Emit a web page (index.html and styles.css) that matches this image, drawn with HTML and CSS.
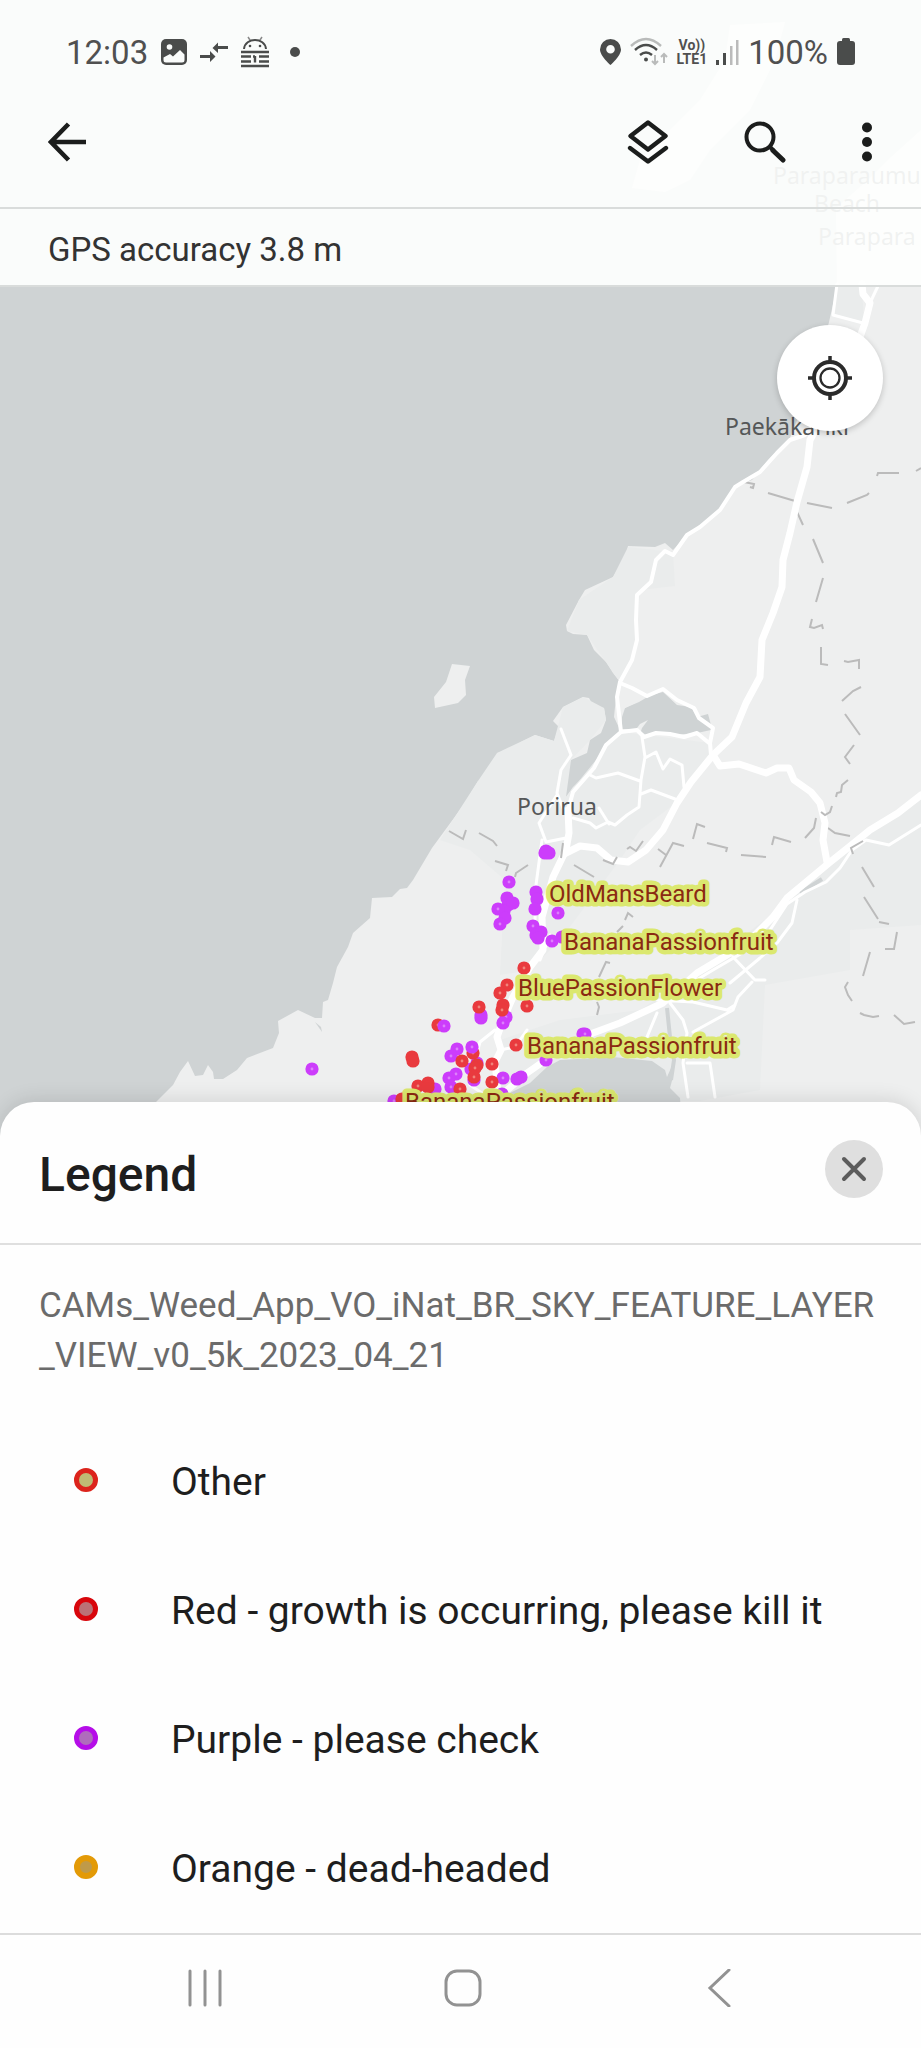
FILE: index.html
```html
<!DOCTYPE html>
<html lang="en">
<head>
<meta charset="utf-8">
<meta name="viewport" content="width=device-width, initial-scale=1">
<title>Map legend</title>
<link rel="stylesheet" href="styles.css">
</head>
<body>
<div class="screen">
  <svg class="map" viewBox="0 0 921 1140" role="img" aria-label="Map of weed sites around Porirua">
    <defs>
      <g id="p"><circle r="6.6" fill="#cc3dfb"/><circle r="1.4" fill="#dd80fb"/></g>
      <g id="r"><circle r="6.6" fill="#e93a3e"/><circle r="1.4" fill="#f0857c"/></g>
      <circle id="ps" r="6.6" fill="#cc3dfb"/>
      <circle id="rs" r="6.6" fill="#e93a3e"/>
    </defs>
    <rect class="water" width="921" height="1140"/>
    <path class="land" d="M730 25L785 22L775 60L750 110L710 150L690 180L665 192L632 188L640 160L670 130L700 100L725 60Z"/>
    <path class="land" d="M921 130L890 158L868 180L836 208L837 287L829 322L815 375L790 438L768 460L752 480L735 486L720 508L700 526L687 535L673 550L665 543L655 547L628 546L626 556L613 577L585 590L579 600L566 625L567 631L573 634L587 635L594 650L606 662L613 673L620 682L616 697L614 717L621 732L608 742L601 757L587 773L573 787L566 797L561 787L563 773L571 760L587 753L590 740L601 733L606 720L604 708L594 707L589 698L583 697L563 707L553 721L559 727L554 741L535 735L521 742L513 750L497 753L497 766L494 778L478 781L465 803L432 848L413 880L407 888L400 889L392 897L372 898L370 918L353 933L348 947L337 967L333 983L328 1000L323 1002L322 1018L315 1018L298 1010L278 1021L279 1033L273 1048L247 1058L237 1070L223 1079L214 1079L213 1072L208 1065L203 1075L195 1076L188 1061L180 1072L173 1085L157 1101L120 1140H921Z"/>
    <path class="land" d="M452 664L470 666L465 680L466 695L458 703L435 708L434 697L446 682Z"/>
    <g class="urban">
      <path d="M628 547L673 552L675 586L640 590L636 640L632 660L620 682L606 662L587 635L567 631L579 600L613 577Z"/>
      <path d="M563 707L583 697L604 708L606 720L590 740L571 760L566 797L600 755L621 732L710 743L711 760L680 800L640 830L620 860L560 940L530 970L500 975L505 880L470 850L440 840L478 781L497 753L535 735L554 741Z"/>
      <path d="M921 800L860 840L790 900L700 970L640 1010L560 1020L500 1040L490 1101H700L760 1090L765 985L850 970L850 930L921 925Z"/>
      <path d="M838 287L833 315L864 323L862 287Z"/>
    </g>
    <path class="water" d="M622 717L625 708L639 702L651 695L663 692L677 705L691 707L697 717L708 714L711 725L711 730L697 733L673 735L646 735L637 729L622 729Z"/>
    <path class="land" d="M620 684L632 689L644 696L639 701L625 708L620 712Z"/>
    <path class="land" d="M634 732L640 724L648 720L642 728L640 734Z"/>
    <path class="water" d="M510 1093L530 1083L547 1067L560 1060L613 1057L652 1061L665 1070L667 1077L671 1068L673 1077L670 1088L680 1098L683 1140H520L518 1104Z"/>
    <path class="water" d="M315 1022L322 1032L321 1027Z"/>
    <path class="river" d="M667 1008L670 1037L674 1060L671 1080M800 893L822 879M768 922L778 912"/>
    <g class="dash">
      <path d="M744 482L754 484L753 488L750 487M768 493L795 501M796 502L797 512L803 525M807 503L832 508M847 503L867 495L869 493M877 476L878 473H899M916 471L921 468M813 539L823 563M823 578L816 602M812 619L810 627L814 628L822 625L823 629M821 647V664L828 665M844 661L848 662L859 660V669M842 701L853 691L861 687M845 714L860 735M854 745L845 757L850 764M848 780L842 785L841 792L837 793L836 797M816 818L814 828L805 838M828 828L835 833L850 836M772 845L774 837L791 842M862 867L874 887M864 897L878 919M879 922L889 924M897 932L894 949H885M870 952L863 976M848 982L845 987L848 995L852 1001M860 1013L864 1015L873 1017L879 1016M894 1015L904 1024L915 1022"/>
      <path d="M449 831L463 839L466 830M479 833L493 841L497 846M495 861L508 865L506 871M528 865L516 873L515 877M574 865L594 877M627 849L630 847L636 851L643 841M660 867L673 843L684 846M658 849L666 855M693 839L697 824L705 827M707 843L727 848L726 852M741 855L766 857M617 932L623 926M625 920L628 913L633 917M599 977L606 962L610 963M597 1002L599 1007L597 1015"/>
    </g>
    <g class="road wide">
      <path d="M862 284L863 294L870 303L865 323L860 337L838 390L810 440L807 467L797 502L790 533L783 560L782 587L773 613L762 640L760 677L746 703L732 737L713 755L691 782L677 803L663 830L646 850L628 862L611 860L597 848L580 846L566 853"/>
      <path d="M713 755L720 766L739 764L766 773L777 768L789 768L794 780L811 792L820 803L825 823L823 840L827 862"/>
      <path d="M921 795L898 813L870 830L849 847L829 863L787 898L773 917L747 943L697 973L663 1003L620 1023L593 1033L567 1045L527 1073L505 1092"/>
      <path d="M568 810L569 833L566 850L553 877L542 917L543 950L530 967L513 997L503 1020L497 1037L501 1050L495 1062L500 1110"/>
    </g>
    <g class="road mid">
      <path d="M838 400L805 435L790 440L777 453L760 472L743 482L735 487L720 510L700 527L687 535L673 555L665 551L656 560L651 582L637 595L636 620L637 640L632 660L620 682L617 697L621 732L606 745L594 768L573 792L568 810"/>
      <path d="M620 683L632 688L647 696L663 689L677 700L694 708L699 718L713 728L710 743L711 755M621 732L637 730L644 737L656 733L670 734L684 737L697 733L709 743"/>
    </g>
    <g class="road thin">
      <path d="M837 284L833 315L863 323M878 286L870 303"/>
      <path d="M642 737L645 757L641 780L639 807L627 815L615 825L608 822L596 828L590 823L573 818M599 808L609 824M590 775L596 778L618 773L640 781M645 758L656 752L663 769L670 759L682 765L684 787M641 794L651 790L675 799"/>
      <path d="M561 729L571 755L561 770L557 793L565 813M557 795L539 823L546 842L566 838M542 840L536 885L535 920"/>
      <path d="M921 825L889 845L866 840L852 850L840 868L826 882L805 892L787 904L770 930M797 900L792 923L777 943L760 958L730 983M773 935L713 970L680 990M733 957L755 980H765M752 982L738 997L733 1010L693 1032M657 1000L693 1002L727 1010L735 1005M670 1003L683 1020L687 1033L683 1063L688 1097M687 1063L710 1063L715 1097M657 1013L647 1037M550 935L540 960M500 1050L515 1047L527 1030M495 1030L480 1042L475 1060M470 1085L482 1093"/>
    </g>
    <path class="dash" d="M832 806L830 812L825 815L821 812M863 841L851 848L853 854M563 843L561 858M603 860L613 864L617 857"/>

    <g class="place">
      <text x="773" y="184">Paraparaumu</text>
      <text x="814" y="212">Beach</text>
      <text x="818" y="245">Parapara</text>
      <text x="725" y="435">Paekākāriki</text>
      <text x="517" y="815">Porirua</text>
    </g>

    <g>
      <use href="#ps" x="546" y="851"/><use href="#ps" x="549" y="853"/><use href="#ps" x="545" y="853"/><use href="#p" x="509" y="882"/><use href="#ps" x="507" y="898"/><use href="#ps" x="508" y="905"/><use href="#ps" x="513" y="903"/><use href="#ps" x="504" y="911"/><use href="#p" x="498" y="909"/><use href="#ps" x="505" y="918"/><use href="#p" x="500" y="924"/>
      <use href="#ps" x="536" y="892"/><use href="#ps" x="537" y="899"/><use href="#ps" x="535" y="909"/><use href="#p" x="558" y="913"/><use href="#p" x="533" y="926"/><use href="#ps" x="541" y="932"/><use href="#ps" x="536" y="935"/><use href="#ps" x="538" y="938"/><use href="#ps" x="562" y="937"/><use href="#p" x="552" y="941"/>
      <use href="#ps" x="481" y="1015"/><use href="#ps" x="481" y="1018"/><use href="#p" x="506" y="1017"/><use href="#p" x="503" y="1023"/><use href="#ps" x="583" y="1034"/><use href="#p" x="585" y="1034"/><use href="#p" x="457" y="1049"/><use href="#p" x="451" y="1056"/><use href="#p" x="546" y="1060"/><use href="#p" x="456" y="1074"/><use href="#p" x="449" y="1078"/><use href="#p" x="451" y="1087"/><use href="#p" x="503" y="1078"/><use href="#ps" x="517" y="1079"/><use href="#ps" x="521" y="1077"/><use href="#ps" x="477" y="1063"/><use href="#ps" x="471" y="1069"/><use href="#ps" x="474" y="1080"/><use href="#ps" x="435" y="1089"/><use href="#p" x="502" y="1094"/><use href="#p" x="394" y="1101"/><use href="#p" x="312" y="1069"/>
      <use href="#r" x="524" y="968"/><use href="#r" x="507" y="985"/><use href="#r" x="500" y="993"/><use href="#rs" x="503" y="1005"/><use href="#r" x="502" y="1010"/><use href="#r" x="527" y="1006"/><use href="#r" x="479" y="1007"/><use href="#r" x="438" y="1025"/><use href="#p" x="444" y="1026"/><use href="#r" x="516" y="1045"/><use href="#rs" x="412" y="1057"/><use href="#rs" x="413" y="1061"/><use href="#r" x="473" y="1053"/><use href="#p" x="472" y="1047"/><use href="#r" x="462" y="1061"/><use href="#r" x="492" y="1064"/><use href="#rs" x="477" y="1065"/><use href="#r" x="475" y="1068"/><use href="#r" x="474" y="1077"/><use href="#r" x="492" y="1082"/><use href="#r" x="428" y="1083"/><use href="#r" x="418" y="1086"/><use href="#rs" x="428" y="1087"/><use href="#r" x="460" y="1089"/><use href="#rs" x="402" y="1099"/>
    </g>
    <g class="weed">
      <text x="549" y="902">OldMansBeard</text>
      <text x="564" y="950">BananaPassionfruit</text>
      <text x="518" y="996">BluePassionFlower</text>
      <text x="527" y="1054">BananaPassionfruit</text>
      <text x="405" y="1110">BananaPassionfruit</text>
    </g>
  </svg>

  <header class="top">
    <div class="status">
      <div class="status-group">
        <time>12:03</time>
        <svg width="26" height="26" viewBox="0 0 26 26"><rect width="26" height="26" rx="5" fill="#4a4c4b"/><circle cx="8.500" cy="8" r="2.800" fill="#fafcfb"/><path d="M2.500 18.500L9 15L12 17.500L19 11L23.500 15.500V21Q23.500 23.500 21 23.500H5Q2.500 23.500 2.500 21Z" fill="#fafcfb"/></svg>
        <svg width="28" height="26" viewBox="0 0 28 26" fill="#4a4c4b"><path d="M0 16H10V12L15.500 17.500L10 23V19H0ZM28 7H18V3.500L12.500 9L18 14V10H28Z"/></svg>
        <svg width="28" height="32" viewBox="0 0 28 32"><path d="M7 1L9 4M21 1L19 4" stroke="#888" stroke-width="1.500"/><path d="M3 13C4 1 24 1 25 13" fill="none" stroke="#4a4c4b" stroke-width="2"/><circle cx="9" cy="10" r="1.300" fill="#4a4c4b"/><circle cx="19" cy="10" r="1.300" fill="#4a4c4b"/><path d="M0 16H28M0 20.500H10M18 20.500H28M0 25.500H10M18 25.500H28M0 30H28M14 20V26.500M12 20.500H14" stroke="#4a4c4b" stroke-width="2.400"/></svg>
        <svg class="more-dot" width="10" height="10" viewBox="0 0 10 10"><circle cx="5" cy="5" r="5" fill="#4a4c4b"/></svg>
      </div>
      <div class="status-group status-right">
        <svg width="21" height="26" viewBox="0 0 21 26"><path d="M10.500 0A10.500 10.500 0 0 0 0 10.500C0 17 10.500 26 10.500 26S21 17 21 10.500A10.500 10.500 0 0 0 10.500 0ZM10.500 6A4.300 4.300 0 1 1 10.500 14.600A4.300 4.300 0 0 1 10.500 6Z" fill="#4a4c4b"/></svg>
        <svg width="38" height="30" viewBox="0 0 38 30" fill="none" stroke-width="2.400"><path d="M1 9Q16 -5 31 9" stroke="#b9bbba"/><path d="M5 13Q16 3 27 13M10 18Q16 13 22 18" stroke="#4a4c4b"/><circle cx="16" cy="22.500" r="2" fill="#4a4c4b"/><path d="M25 18V27M22 24L25 27L28 24M34 26V17M31 20L34 17L37 20" stroke="#b9bbba" stroke-width="2"/></svg>
        <div class="volte"><span>Vo))</span><span>LTE1</span></div>
        <svg width="23" height="26" viewBox="0 0 23 26"><path d="M0 21H3V26H0ZM7 14H10V26H7Z" fill="#4a4c4b"/><path d="M14 7H16.500V26H14ZM20 1H22.500V26H20Z" fill="#bbb"/></svg>
        <span class="percent">100%</span>
        <svg width="18" height="28" viewBox="0 0 18 28" fill="#4a4c4b"><rect x="5" width="8" height="6" rx="1.500"/><rect y="3" width="18" height="24" rx="3"/></svg>
      </div>
    </div>
    <div class="appbar">
      <button class="icon-btn" aria-label="Back"><svg width="38" height="40" viewBox="0 0 38 40" fill="none" stroke="#1b1d1c" stroke-width="4.600"><path d="M38 20H4M20.500 2L3 20L20.500 38"/></svg></button>
      <div class="actions">
        <button class="icon-btn" aria-label="Layers"><svg width="42" height="44" viewBox="0 0 42 44" fill="none" stroke="#1b1d1c" stroke-width="4.400" stroke-linejoin="round" stroke-linecap="round"><path d="M21 2.500L38.500 16L21 29.500L3.500 16ZM3 28L21 41.500L39 28"/></svg></button>
        <button class="icon-btn" aria-label="Search"><svg width="42" height="42" viewBox="0 0 42 42" fill="none" stroke="#1b1d1c" stroke-width="4"><circle cx="16" cy="16" r="13.500"/><path d="M26 26L30 30" /><path d="M29 29.500L39 39" stroke-width="5" stroke-linecap="round"/></svg></button>
        <button class="icon-btn" aria-label="More options"><svg width="12" height="42" viewBox="0 0 12 42" fill="#1b1d1c"><circle cx="6" cy="6.500" r="5"/><circle cx="6" cy="21" r="5"/><circle cx="6" cy="35.500" r="5"/></svg></button>
      </div>
    </div>
    <p class="gps">GPS accuracy 3.8 m</p>
  </header>

  <main class="map-area">
    <button class="locate" aria-label="Show my location"><svg width="44" height="44" viewBox="0 0 44 44" fill="none" stroke="#2b2b2b"><circle cx="22" cy="22" r="16" stroke-width="4"/><circle cx="22" cy="22" r="9.500" stroke-width="2.300"/><path d="M22 0V6M22 38V44M0 22H6M38 22H44" stroke-width="3.500"/></svg></button>
  </main>

  <section class="sheet" aria-labelledby="legend-title">
    <div class="sheet-head">
      <h1 id="legend-title">Legend</h1>
      <button class="close" aria-label="Close"><svg width="26" height="26" viewBox="0 0 26 26" stroke="#5c5c5c" stroke-width="4" stroke-linecap="round"><path d="M3 3L23 23M23 3L3 23"/></svg></button>
    </div>
    <h2 class="layer">CAMs_Weed_App_VO_iNat_BR_SKY_FEATURE_LAYER<wbr>_VIEW_v0_5k_2023_04_21</h2>
    <ul class="legend">
      <li><span class="dot other"></span>Other</li>
      <li><span class="dot red"></span>Red - growth is occurring, please kill it</li>
      <li><span class="dot purple"></span>Purple - please check</li>
      <li><span class="dot orange"></span>Orange - dead-headed</li>
    </ul>
  </section>

  <nav class="sysnav" aria-label="System">
    <button class="icon-btn" aria-label="Recent apps"><svg width="38" height="38" viewBox="0 0 38 38" stroke="#929292" stroke-width="3" stroke-linecap="round"><path d="M4 2V36M19 2V36M34 2V36"/></svg></button>
    <button class="icon-btn" aria-label="Home"><svg width="38" height="38" viewBox="0 0 38 38" fill="none" stroke="#929292" stroke-width="3"><rect x="2" y="2" width="34" height="34" rx="11"/></svg></button>
    <button class="icon-btn" aria-label="Back"><svg width="38" height="38" viewBox="0 0 38 38" fill="none" stroke="#929292" stroke-width="3" stroke-linecap="round"><path d="M28 1L9 19L28 37"/></svg></button>
  </nav>
</div>
</body>
</html>
```
FILE: styles.css
```css
* { box-sizing: border-box; }

body {
  margin: 0;
  font-family: Roboto, "Liberation Sans", sans-serif;
  color: #1e1e1e;
  background: #fff;
}

h1, h2, p, ul { margin: 0; padding: 0; font-weight: 400; }
svg { display: block; flex: none; }

button {
  border: 0;
  padding: 0;
  background: none;
  font: inherit;
  cursor: pointer;
}

.screen {
  position: relative;
  display: flex;
  flex-direction: column;
  min-height: 100vh;
  overflow: hidden;
}

/* Map drawing, behind the bars and the sheet */
.map {
  position: absolute;
  top: 0;
  left: 0;
  width: 100%;
}
.water { fill: #cfd3d4; }
.land { fill: #eeefef; }
.urban { fill: #eaecec; }
.river { fill: none; stroke: #cfd3d4; stroke-width: 4; }
.road { fill: none; stroke: #fff; stroke-linejoin: round; stroke-linecap: round; }
.wide { stroke-width: 7; }
.mid { stroke-width: 4; }
.thin { stroke-width: 3; }
.dash { fill: none; stroke: #bbb; stroke-width: 2; }
.place { font: 23px "Noto Sans", sans-serif; fill: #555758; }
.weed {
  font-size: 24px;
  fill: #8a2a12;
  stroke: #dbe86f;
  stroke-width: 9;
  stroke-linejoin: round;
  paint-order: stroke;
}

/* Translucent bars */
.top {
  position: relative;
  background: rgba(254, 255, 254, 0.92);
}
.status {
  display: flex;
  align-items: center;
  justify-content: space-between;
  height: 104px;
  padding: 0 66px;
  color: #505050;
  font-size: 33px;
}
.status-group { display: flex; align-items: center; gap: 13px; }
.status-right { gap: 9px; }
.more-dot { margin-left: 8px; }
.volte {
  display: flex;
  flex-direction: column;
  align-items: center;
  font-size: 14px;
  font-weight: 700;
  line-height: 14px;
}
.appbar {
  display: flex;
  align-items: center;
  justify-content: space-between;
  height: 105px;
  padding: 0 48px 28px;
  border-bottom: 2px solid #d9dcdb;
}
.actions { display: flex; align-items: center; gap: 75px; }
.icon-btn { display: flex; }
.gps {
  padding: 6px 48px 0;
  font-size: 33px;
  line-height: 70px;
  color: #333;
  border-bottom: 2px solid #d9dcdb;
}

.map-area {
  position: relative;
  flex: 1;
  display: flex;
  justify-content: flex-end;
  align-items: flex-start;
  padding: 38px;
}
.locate {
  display: grid;
  place-items: center;
  width: 106px;
  height: 106px;
  border-radius: 50%;
  background: #fff;
  box-shadow: 0 2px 6px rgba(0, 0, 0, 0.2);
}

/* Legend sheet */
.sheet {
  position: relative;
  background: #fefefe;
  border-radius: 34px 34px 0 0;
  box-shadow: 0 -2px 20px rgba(0, 0, 0, 0.12);
}
.sheet-head {
  display: flex;
  align-items: center;
  justify-content: space-between;
  height: 143px;
  padding: 0 38px 0 39px;
  border-bottom: 2px solid #dfdfdf;
}
.sheet-head h1 { padding-top: 4px; font-size: 48px; font-weight: 500; line-height: 60px; }
.close {
  display: grid;
  place-items: center;
  width: 58px;
  height: 58px;
  margin-bottom: 8px;
  border-radius: 50%;
  background: #dfdfdf;
}
.layer {
  padding: 36px 39px;
  font-size: 35px;
  line-height: 50px;
  color: #6b6b6b;
}
.legend { list-style: none; }
.legend li {
  display: flex;
  align-items: center;
  gap: 73px;
  height: 129px;
  padding: 0 74px;
  font-size: 39px;
}
.dot {
  flex: none;
  width: 24px;
  height: 24px;
  margin-bottom: 4px;
  border: 5px solid;
  border-radius: 50%;
}
.other { border-color: #dc241c; background: #bfbb74; }
.red { border-color: #d8060c; background: #bb7276; }
.purple { border-color: #b50de8; background: #af6cbc; }
.orange { border-color: #e39a07; background: #bf9a49; border-width: 6px; }

.sysnav {
  position: relative;
  display: flex;
  justify-content: space-between;
  align-items: center;
  height: 115px;
  padding: 0 182px 8px 186px;
  background: #fefefe;
  border-top: 2px solid #dcdcdc;
}
```
